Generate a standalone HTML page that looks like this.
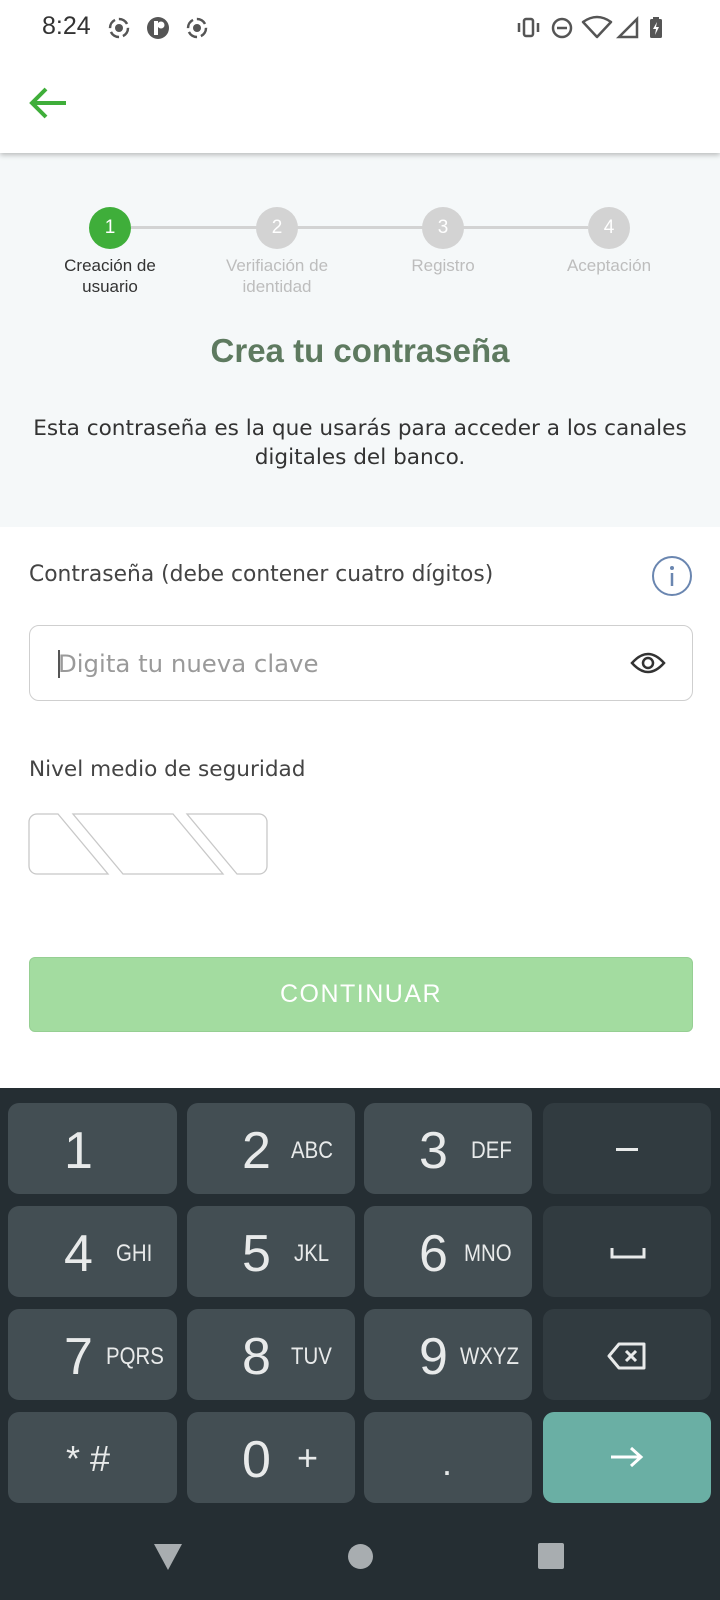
<!DOCTYPE html>
<html><head><meta charset="utf-8"><style>
*{margin:0;padding:0;box-sizing:border-box}
body{width:720px;height:1600px;position:relative;background:#fff;font-family:"Liberation Sans",sans-serif;overflow:hidden}
.a{position:absolute}
.dv{font-family:"DejaVu Sans","Liberation Sans",sans-serif}
.hdr{top:0;left:0;width:720px;height:153px;background:#fff;box-shadow:0 2px 5px rgba(0,0,0,.25);z-index:2}
.gray{top:153px;left:0;width:720px;height:374px;background:#f5f8f9}
.circ{width:42px;height:42px;border-radius:50%;background:#d3d3d3;color:#fff;font-size:19px;text-align:center;line-height:42px;top:207px}
.lbl{width:160px;text-align:center;font-size:17px;line-height:21px;color:#bdbdbd;top:255px}
.key{border-radius:11px;background:#434e53;color:#e8eaea}
.fn{background:#313b40}
.d{position:absolute;font-size:52px;top:18px}
.l{position:absolute;font-size:24px;top:34px;transform:scaleX(.85);transform-origin:left}
</style></head><body>
<div class="a hdr">
 <div class="a" style="left:42px;top:12px;font-size:25px;color:#333">8:24</div>
 <svg class="a" style="left:106px;top:15px" width="110" height="26" viewBox="0 0 110 26">
  <circle cx="13" cy="13" r="9" fill="none" stroke="#555" stroke-width="2.5" stroke-dasharray="10 4"/><circle cx="13" cy="13" r="4" fill="#555"/>
  <circle cx="52" cy="13" r="11" fill="#555"/><rect x="48" y="6" width="4" height="14" fill="#fff"/><circle cx="55" cy="10" r="3.5" fill="#fff"/>
  <circle cx="91" cy="13" r="9" fill="none" stroke="#555" stroke-width="2.5" stroke-dasharray="10 4"/><circle cx="91" cy="13" r="4" fill="#555"/>
 </svg>
 <svg class="a" style="left:516px;top:15px" width="170" height="26" viewBox="0 0 170 26">
  <rect x="8" y="4" width="9" height="17" rx="2" fill="none" stroke="#555" stroke-width="2.5"/><path d="M3 8v9M22 8v9" stroke="#555" stroke-width="2.5"/>
  <circle cx="46" cy="13" r="9" fill="none" stroke="#555" stroke-width="2.5"/><path d="M41 13h10" stroke="#555" stroke-width="2.5"/>
  <path d="M67 7q14-10 28 0l-14 15z" fill="none" stroke="#555" stroke-width="2.5" stroke-linejoin="round"/>
  <path d="M103 22l18-18v18z" fill="none" stroke="#555" stroke-width="2.5"/>
  <rect x="134" y="4" width="12" height="19" rx="1.5" fill="#555"/><rect x="137" y="2" width="6" height="3" fill="#555"/><path d="M141 7l-4 7h3l-1 6 4-8h-3z" fill="#fff"/>
 </svg>
 <svg class="a" style="left:28px;top:86px" width="42" height="34" viewBox="0 0 42 34"><path d="M4 17h34M18 3L4 17l14 14" fill="none" stroke="#3fae3a" stroke-width="4"/></svg>
</div>
<div class="a gray"></div>
<div class="a" style="left:131px;top:226px;width:457px;height:3px;background:#d3d3d3"></div>
<div class="a circ" style="left:89px;background:#3fae3a">1</div>
<div class="a circ" style="left:256px">2</div>
<div class="a circ" style="left:422px">3</div>
<div class="a circ" style="left:588px">4</div>
<div class="a lbl" style="left:30px;color:#333">Creación de<br>usuario</div>
<div class="a lbl" style="left:197px">Verifiación de<br>identidad</div>
<div class="a lbl" style="left:363px">Registro</div>
<div class="a lbl" style="left:529px">Aceptación</div>
<div class="a" style="top:332px;left:0;width:720px;text-align:center;font-size:33px;font-weight:bold;color:#5e7a60">Crea tu contraseña</div>
<div class="a dv" style="top:414px;left:0;width:720px;text-align:center;font-size:21.6px;line-height:29px;color:#333">Esta contraseña es la que usarás para acceder a los canales<br>digitales del banco.</div>
<div class="a dv" style="top:562px;left:29px;font-size:21.8px;color:#444">Contraseña (debe contener cuatro dígitos)</div>
<svg class="a" style="left:651px;top:555px" width="42" height="42" viewBox="0 0 42 42"><circle cx="21" cy="21" r="19" fill="none" stroke="#6a86b0" stroke-width="2"/><circle cx="21" cy="13" r="2" fill="#6a86b0"/><path d="M21 18v13" stroke="#6a86b0" stroke-width="2.5"/></svg>
<div class="a" style="left:29px;top:625px;width:664px;height:76px;border:1px solid #cfcfcf;border-radius:10px"></div>
<div class="a" style="left:58px;top:650px;width:2px;height:28px;background:#555"></div>
<div class="a dv" style="left:58px;top:649px;font-size:24.4px;color:#9a9a9a">Digita tu nueva clave</div>
<svg class="a" style="left:630px;top:651px" width="36" height="24" viewBox="0 0 36 24"><path d="M2 12Q18-6 34 12Q18 30 2 12z" fill="none" stroke="#333" stroke-width="2.5"/><circle cx="18" cy="12" r="5" fill="none" stroke="#333" stroke-width="2.5"/></svg>
<div class="a dv" style="top:757px;left:29px;font-size:21.6px;color:#444">Nivel medio de seguridad</div>
<svg class="a" style="left:28px;top:813px" width="241" height="62" viewBox="0 0 241 62"><path d="M9 1H30L80 61H9A8 8 0 0 1 1 53V9A8 8 0 0 1 9 1z M45 1H145L195 61H95z M159 1H231A8 8 0 0 1 239 9V53A8 8 0 0 1 231 61H209z" fill="none" stroke="#c8c8c8" stroke-width="1.3"/></svg>
<div class="a" style="left:29px;top:957px;width:664px;height:75px;background:#a3dca0;border-radius:6px;border:1px solid #96cf93;color:#fff;font-size:25px;letter-spacing:1.5px;text-align:center;line-height:73px">CONTINUAR</div>
<div class="a" style="left:0;top:1088px;width:720px;height:512px;background:#252e33"></div>
<div class="a key" style="left:8px;top:1103px;width:169px;height:91px"><span class="d" style="left:56px">1</span></div>
<div class="a key" style="left:187px;top:1103px;width:168px;height:91px"><span class="d" style="left:55px">2</span><span class="l" style="left:104px">ABC</span></div>
<div class="a key" style="left:364px;top:1103px;width:168px;height:91px"><span class="d" style="left:55px">3</span><span class="l" style="left:107px">DEF</span></div>
<div class="a key fn" style="left:543px;top:1103px;width:168px;height:91px"><div class="a" style="left:73px;top:45px;width:22px;height:3px;background:#e8eaea"></div></div>
<div class="a key" style="left:8px;top:1206px;width:169px;height:91px"><span class="d" style="left:56px">4</span><span class="l" style="left:108px">GHI</span></div>
<div class="a key" style="left:187px;top:1206px;width:168px;height:91px"><span class="d" style="left:55px">5</span><span class="l" style="left:107px">JKL</span></div>
<div class="a key" style="left:364px;top:1206px;width:168px;height:91px"><span class="d" style="left:55px">6</span><span class="l" style="left:100px">MNO</span></div>
<div class="a key fn" style="left:543px;top:1206px;width:168px;height:91px"><svg class="a" style="left:67px;top:40px" width="36" height="14"><path d="M2 2v9h32V2" fill="none" stroke="#e8eaea" stroke-width="3"/></svg></div>
<div class="a key" style="left:8px;top:1309px;width:169px;height:91px"><span class="d" style="left:56px">7</span><span class="l" style="left:98px">PQRS</span></div>
<div class="a key" style="left:187px;top:1309px;width:168px;height:91px"><span class="d" style="left:55px">8</span><span class="l" style="left:104px">TUV</span></div>
<div class="a key" style="left:364px;top:1309px;width:168px;height:91px"><span class="d" style="left:55px">9</span><span class="l" style="left:96px">WXYZ</span></div>
<div class="a key fn" style="left:543px;top:1309px;width:168px;height:91px"><svg class="a" style="left:64px;top:33px" width="40" height="28" viewBox="0 0 40 28"><path d="M12 2H37V26H12L2 14z" fill="none" stroke="#e8eaea" stroke-width="3" stroke-linejoin="round"/><path d="M19 9l10 10M29 9L19 19" stroke="#e8eaea" stroke-width="3"/></svg></div>
<div class="a key" style="left:8px;top:1412px;width:169px;height:91px"><span class="l" style="left:58px;top:26px;font-size:36px;transform:none">* #</span></div>
<div class="a key" style="left:187px;top:1412px;width:168px;height:91px"><span class="d" style="left:55px">0</span><span class="l" style="left:110px;top:25px;font-size:36px;transform:none">+</span></div>
<div class="a key" style="left:364px;top:1412px;width:168px;height:91px"><span class="l" style="left:78px;top:30px;font-size:36px;transform:none">.</span></div>
<div class="a key" style="left:543px;top:1412px;width:168px;height:91px;background:#6aafa4"><svg class="a" style="left:66px;top:33px" width="36" height="24" viewBox="0 0 36 24"><path d="M2 12h30M22 3l10 9-10 9" fill="none" stroke="#fff" stroke-width="3"/></svg></div>
<svg class="a" style="left:152px;top:1542px" width="32" height="30"><path d="M2 2h28L16 28z" fill="#a8adb0"/></svg>
<div class="a" style="left:348px;top:1544px;width:25px;height:25px;border-radius:50%;background:#a8adb0"></div>
<div class="a" style="left:538px;top:1543px;width:26px;height:26px;border-radius:2px;background:#a8adb0"></div>
</body></html>
